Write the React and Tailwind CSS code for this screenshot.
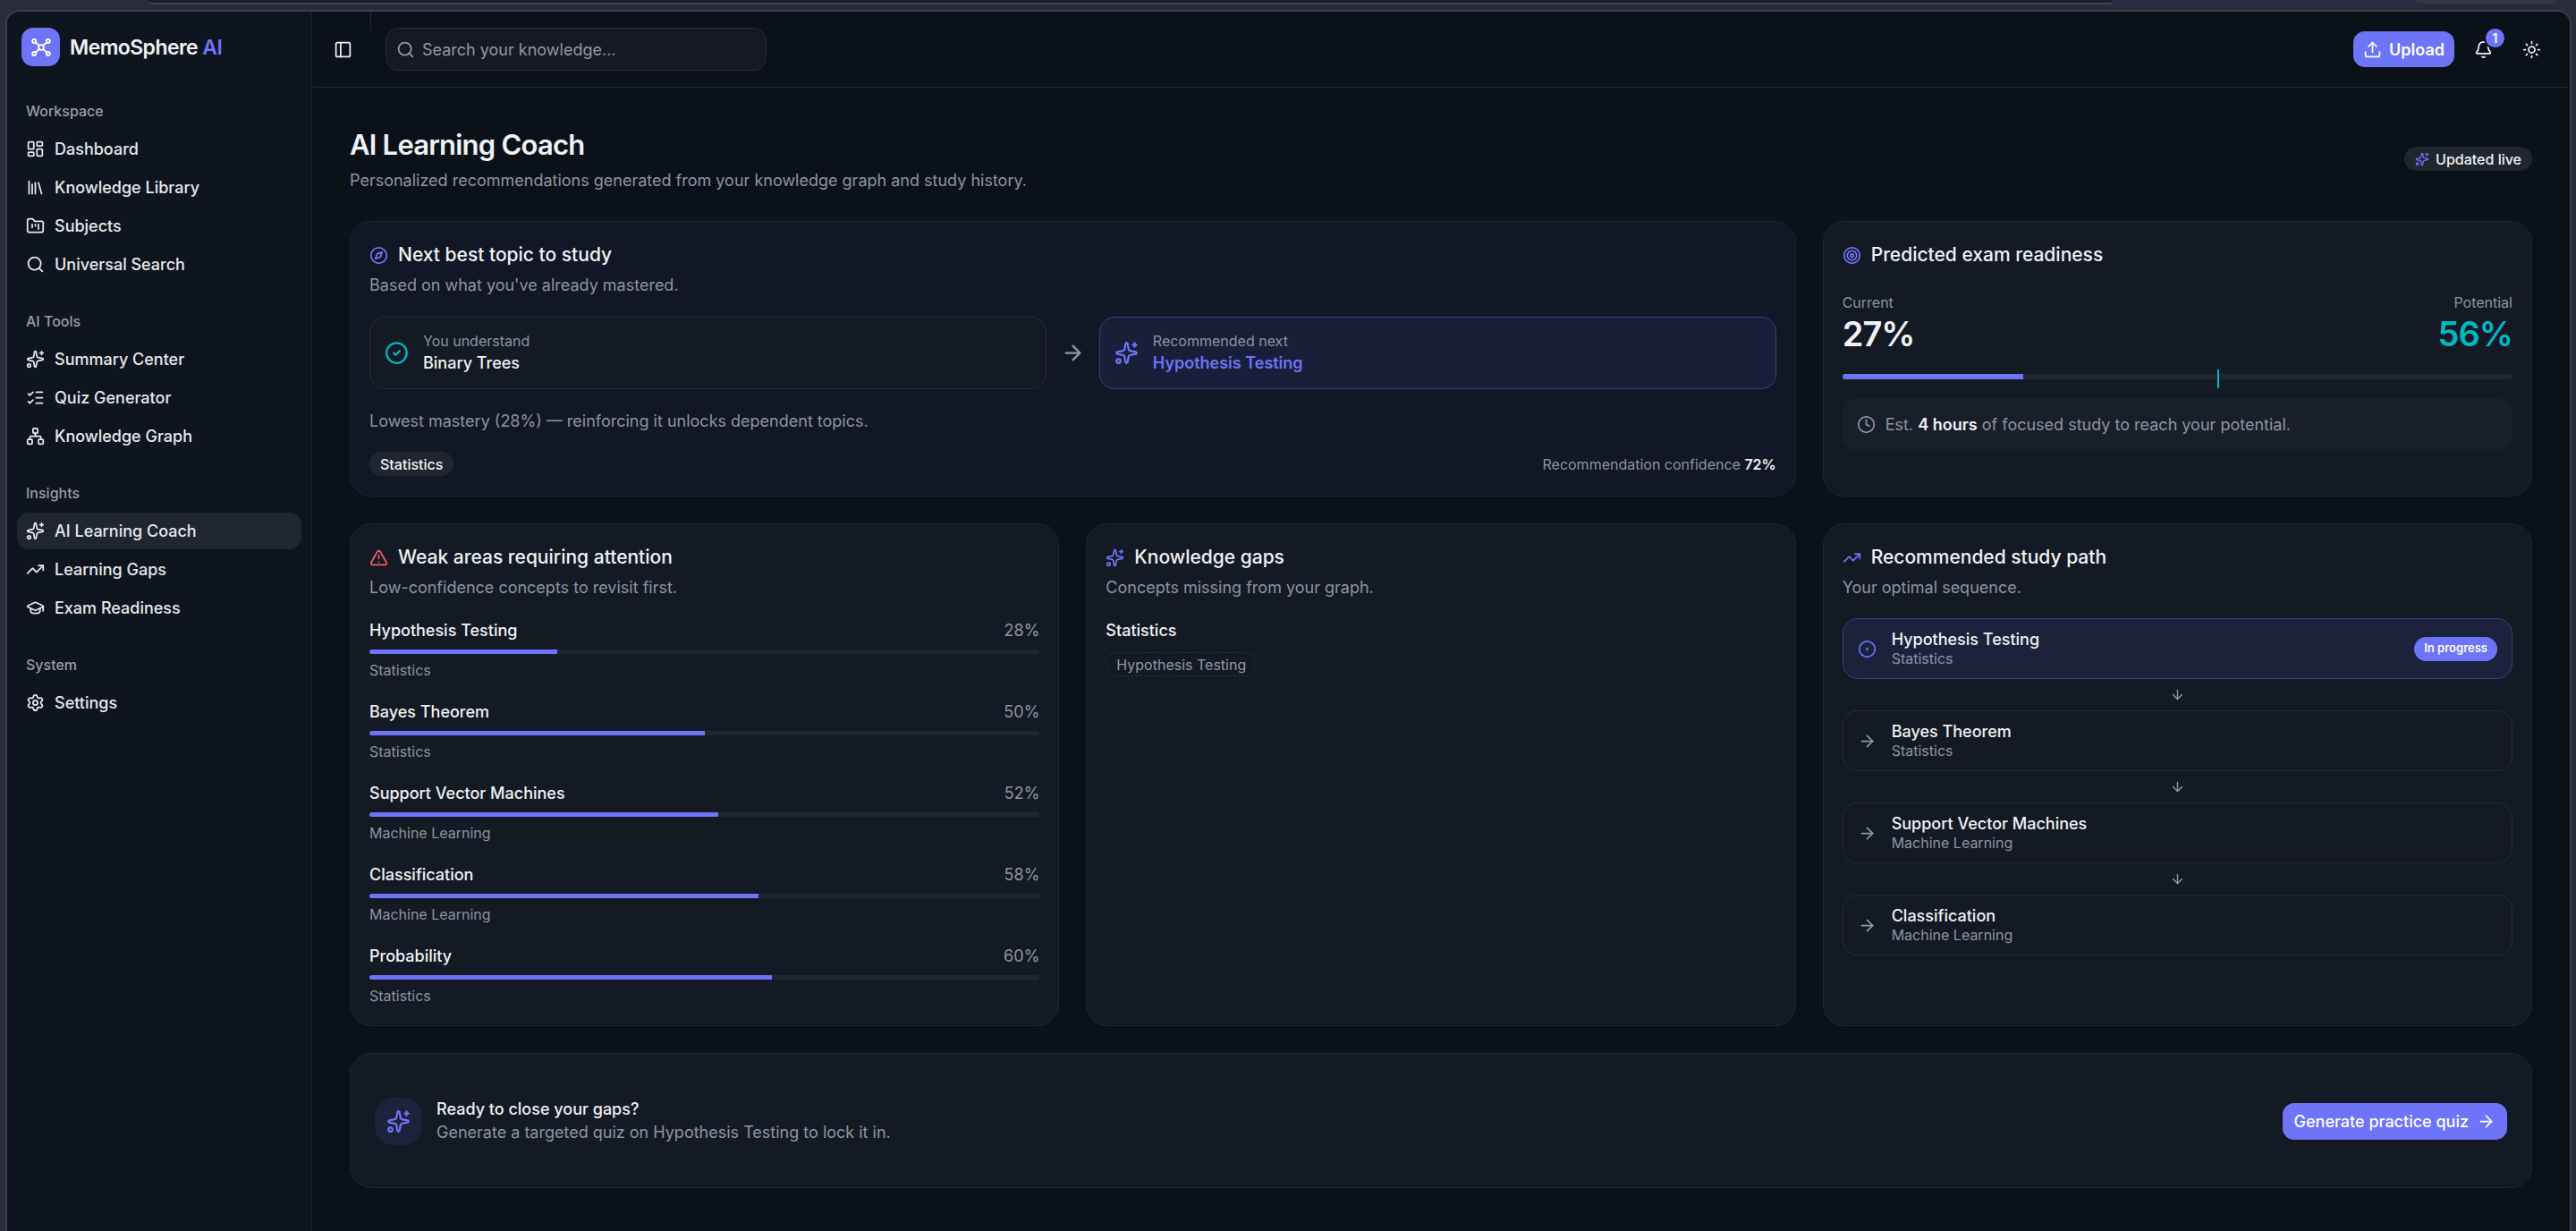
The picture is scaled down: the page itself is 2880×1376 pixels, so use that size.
import React from "react";
import {
  ArrowDown,
  ArrowRight,
  Bell,
  CircleCheck,
  CircleDot,
  Clock,
  Compass,
  FolderKanban,
  GraduationCap,
  LayoutDashboard,
  Library,
  ListChecks,
  Network,
  PanelLeft,
  Search,
  Settings,
  Sparkles,
  Sun,
  Target,
  TrendingUp,
  TriangleAlert,
  Upload,
} from "lucide-react";

const navGroups = [
  {
    label: "Workspace",
    items: [
      { name: "Dashboard", icon: LayoutDashboard },
      { name: "Knowledge Library", icon: Library },
      { name: "Subjects", icon: FolderKanban },
      { name: "Universal Search", icon: Search },
    ],
  },
  {
    label: "AI Tools",
    items: [
      { name: "Summary Center", icon: Sparkles },
      { name: "Quiz Generator", icon: ListChecks },
      { name: "Knowledge Graph", icon: Network },
    ],
  },
  {
    label: "Insights",
    items: [
      { name: "AI Learning Coach", icon: Sparkles, active: true },
      { name: "Learning Gaps", icon: TrendingUp },
      { name: "Exam Readiness", icon: GraduationCap },
    ],
  },
  {
    label: "System",
    items: [{ name: "Settings", icon: Settings }],
  },
];

const weakAreas = [
  { topic: "Hypothesis Testing", subject: "Statistics", score: 28 },
  { topic: "Bayes Theorem", subject: "Statistics", score: 50 },
  { topic: "Support Vector Machines", subject: "Machine Learning", score: 52 },
  { topic: "Classification", subject: "Machine Learning", score: 58 },
  { topic: "Probability", subject: "Statistics", score: 60 },
];

const studyPath = [
  { topic: "Hypothesis Testing", subject: "Statistics", current: true },
  { topic: "Bayes Theorem", subject: "Statistics" },
  { topic: "Support Vector Machines", subject: "Machine Learning" },
  { topic: "Classification", subject: "Machine Learning" },
];

const LogoMark = () => (
  <svg
    viewBox="0 0 24 24"
    className="size-[24px]"
    fill="none"
    stroke="currentColor"
    strokeWidth="1.9"
    strokeLinecap="round"
    aria-hidden="true"
  >
    <circle cx="12" cy="12" r="2.9" />
    <circle cx="4.2" cy="5" r="2" />
    <circle cx="19.8" cy="5" r="2" />
    <circle cx="4.2" cy="19" r="2" />
    <circle cx="19.8" cy="19" r="2" />
    <path d="M5.8 6.4 9.8 10M18.2 6.4 14.2 10M5.8 17.6 9.8 14M18.2 17.6 14.2 14" />
  </svg>
);

const Sidebar = () => (
  <aside className="w-[341px] shrink-0 border-r border-[#20262e] bg-[#0f151e] px-[11px]">
    <a href="#home" className="mt-[18px] flex items-center gap-[11px] px-[5px]">
      <span className="flex size-[43px] items-center justify-center rounded-[13px] bg-[#6e74f7] text-white">
        <LogoMark />
      </span>
      <span className="text-[23px] leading-[28px] font-semibold tracking-tight text-[#f0f2f5]">
        MemoSphere <span className="text-[#6e74f7]">AI</span>
      </span>
    </a>
    <nav className="mt-[28px] flex flex-col gap-[21px]">
      {navGroups.map((group) => (
        <div key={group.label}>
          <p className="flex h-[44px] items-center px-[10px] text-[16px] font-medium text-[#9a9ea6]">
            {group.label}
          </p>
          <ul className="flex flex-col gap-[2px]">
            {group.items.map(({ name, icon: Icon, active }) => (
              <li key={name}>
                <a
                  href="#nav"
                  className={`flex h-[41px] items-center gap-[11px] rounded-[13px] px-[10px] text-[18px] font-medium text-[#e6e9ed] ${
                    active ? "bg-[#20262f]" : ""
                  }`}
                >
                  <Icon className="size-[21px]" />
                  {name}
                </a>
              </li>
            ))}
          </ul>
        </div>
      ))}
    </nav>
  </aside>
);

const Header = () => (
  <header className="flex h-[85px] items-center border-b border-[#20262e] pr-[21px] pl-[13px]">
    <button className="flex size-[43px] items-center justify-center text-[#f0f2f5]" aria-label="Toggle sidebar">
      <PanelLeft className="size-[21px]" />
    </button>
    <span className="ml-[9px] h-[21px] w-px self-start bg-[#262b33]" />
    <label className="ml-[16px] flex h-[48px] w-[426px] items-center gap-[8px] rounded-[14px] border border-[#282d36] bg-[#151a22] px-[11px] text-[#9298a5]">
      <Search className="size-[21px]" />
      <input
        type="text"
        aria-label="Search your knowledge"
        placeholder="Search your knowledge..."
        className="min-w-0 flex-1 bg-transparent text-[18px] outline-none placeholder:text-[#9298a5]"
      />
    </label>
    <div className="ml-auto flex items-center gap-[11px]">
      <button className="flex h-[40px] items-center gap-[8px] rounded-[13px] bg-[#6e74f7] px-[11px] text-[18px] font-semibold text-white">
        <Upload className="size-[21px]" />
        Upload
      </button>
      <button className="relative flex size-[43px] items-center justify-center text-[#f0f2f5]" aria-label="Notifications">
        <Bell className="size-[21px]" />
        <span className="absolute -top-[2px] -right-[2px] flex size-[21px] items-center justify-center rounded-full bg-[#6e74f7] text-[14px] font-semibold text-white ring-2 ring-[#0b1118]">
          1
        </span>
      </button>
      <button className="flex size-[43px] items-center justify-center text-[#f0f2f5]" aria-label="Toggle theme">
        <Sun className="size-[21px]" />
      </button>
    </div>
  </header>
);

const Card = ({ className = "bg-[#141a24] px-[21px]", children }) => (
  <section className={`rounded-[24px] border border-[#20262e] pt-[23px] pb-[22px] ${className}`}>{children}</section>
);

const CardHeader = ({ icon: Icon, iconColor = "text-[#6e74f7]", title, subtitle }) => (
  <div className="flex flex-col gap-[6px]">
    <h2 className="flex items-center gap-[11px] text-[21px] leading-[28px] font-medium text-[#f0f2f5]">
      <Icon className={`size-[21px] ${iconColor}`} />
      {title}
    </h2>
    {subtitle && <p className="text-[18px] leading-[27px] text-[#8e94a2]">{subtitle}</p>}
  </div>
);

const NextTopic = () => (
  <Card className="col-span-2 bg-[#111724] px-[21px]">
    <CardHeader icon={Compass} title="Next best topic to study" subtitle="Based on what you've already mastered." />
    <div className="mt-[22px] flex items-center gap-[16px]">
      <div className="flex h-[81px] flex-1 items-center gap-[16px] rounded-[17px] border border-[#282d36] bg-[#141a24] px-[16px]">
        <CircleCheck className="size-[27px] text-[#00b8c4]" />
        <div>
          <p className="text-[16px] leading-[21px] text-[#8e94a2]">You understand</p>
          <p className="text-[18px] leading-[27px] font-medium text-[#f0f2f5]">Binary Trees</p>
        </div>
      </div>
      <ArrowRight className="size-[27px] text-[#9298a5]" />
      <div className="flex h-[81px] flex-1 items-center gap-[16px] rounded-[17px] border border-[#393e82] bg-[#191f39] px-[16px]">
        <Sparkles className="size-[27px] text-[#6e74f7]" />
        <div>
          <p className="text-[16px] leading-[21px] text-[#8e94a2]">Recommended next</p>
          <p className="text-[18px] leading-[27px] font-semibold text-[#6e74f7]">Hypothesis Testing</p>
        </div>
      </div>
    </div>
    <p className="mt-[22px] text-[18px] leading-[27px] text-[#8e94a2]">
      Lowest mastery (28%) — reinforcing it unlocks dependent topics.
    </p>
    <div className="mt-[21px] flex items-center justify-between text-[16px]">
      <span className="flex h-[27px] items-center rounded-full bg-[#20262f] px-[12px] font-medium text-[#f0f2f5]">
        Statistics
      </span>
      <span className="text-[#8e94a2]">
        Recommendation confidence <span className="font-semibold text-[#f0f2f5]">72%</span>
      </span>
    </div>
  </Card>
);

const Readiness = ({ current = 27, potential = 56 }) => (
  <Card>
    <CardHeader icon={Target} title="Predicted exam readiness" />
    <div className="mt-[29px] flex justify-between">
      <div>
        <p className="text-[16px] leading-[21px] text-[#8e94a2]">Current</p>
        <p className="text-[38px] leading-[48px] font-semibold tracking-tight text-[#f0f2f5]">{current}%</p>
      </div>
      <div className="text-right">
        <p className="text-[16px] leading-[21px] text-[#8e94a2]">Potential</p>
        <p className="text-[38px] leading-[48px] font-semibold tracking-tight text-[#00b8c4]">{potential}%</p>
      </div>
    </div>
    <div className="relative mt-[21px] h-[6px] rounded-full bg-[#20262f]">
      <div className="h-full rounded-l-full bg-[#6e74f7]" style={{ width: `${current}%` }} />
      <span className="absolute -top-[5px] h-[21px] w-[2px] bg-[#00b8c4]" style={{ left: `${potential}%` }} />
    </div>
    <div className="mt-[21px] flex h-[59px] items-center gap-[11px] rounded-[17px] bg-[#191f29] px-[16px] text-[18px] text-[#8e94a2]">
      <Clock className="size-[21px]" />
      <p>
        Est. <span className="font-semibold text-[#f0f2f5]">4 hours</span> of focused study to reach your potential.
      </p>
    </div>
  </Card>
);

const WeakAreas = () => (
  <Card>
    <CardHeader
      icon={TriangleAlert}
      iconColor="text-[#f75a62]"
      title="Weak areas requiring attention"
      subtitle="Low-confidence concepts to revisit first."
    />
    <div className="mt-[21px] flex flex-col gap-[22px]">
      {weakAreas.map((area) => (
        <div key={area.topic}>
          <div className="flex justify-between text-[18px] leading-[27px]">
            <span className="font-medium text-[#f0f2f5]">{area.topic}</span>
            <span className="text-[#8e94a2]">{area.score}%</span>
          </div>
          <div className="my-[8px] h-[5px] overflow-hidden rounded-full bg-[#20262f]">
            <div className="h-full bg-[#6e74f7]" style={{ width: `${area.score}%` }} />
          </div>
          <p className="text-[16px] leading-[21px] text-[#8e94a2]">{area.subject}</p>
        </div>
      ))}
    </div>
  </Card>
);

const KnowledgeGaps = () => (
  <Card>
    <CardHeader icon={Sparkles} title="Knowledge gaps" subtitle="Concepts missing from your graph." />
    <h3 className="mt-[21px] text-[18px] leading-[27px] font-medium text-[#f0f2f5]">Statistics</h3>
    <span className="mt-[11px] inline-flex h-[27px] items-center rounded-full border border-dashed border-[#2b3038] px-[11px] text-[16px] text-[#9298a5]">
      Hypothesis Testing
    </span>
  </Card>
);

const StudyPath = () => (
  <Card>
    <CardHeader icon={TrendingUp} title="Recommended study path" subtitle="Your optimal sequence." />
    <ol className="mt-[21px]">
      {studyPath.map((step, index) => (
        <li key={step.topic}>
          {index > 0 && <ArrowDown className="mx-auto my-[9px] size-[17px] text-[#9298a5]" />}
          <div
            className={`flex items-center gap-[17px] rounded-[17px] border px-[16px] py-[11px] ${
              step.current ? "border-[#393e82] bg-[#1c223c]" : "border-[#282d36]"
            }`}
          >
            {step.current ? (
              <CircleDot className="size-[21px] text-[#6e74f7] [&>circle:last-child]:fill-current [&>circle:last-child]:stroke-[1.5]" />
            ) : (
              <ArrowRight className="size-[21px] text-[#9298a5]" />
            )}
            <div className="flex-1">
              <p className="text-[18px] leading-[23px] font-medium text-[#f0f2f5]">{step.topic}</p>
              <p className="text-[16px] leading-[21px] text-[#8e94a2]">{step.subject}</p>
            </div>
            {step.current && (
              <span className="flex h-[27px] items-center rounded-full bg-[#6e74f7] px-[11px] text-[13px] font-semibold text-white">
                In progress
              </span>
            )}
          </div>
        </li>
      ))}
    </ol>
  </Card>
);

const QuizPrompt = () => (
  <Card className="col-span-3 flex min-h-[151px] items-center gap-[16px] bg-[#141a24] px-[27px]">
    <span className="flex size-[53px] items-center justify-center rounded-[21px] bg-[#1c223c] text-[#6e74f7]">
      <Sparkles className="size-[27px]" />
    </span>
    <div className="flex-1 text-[18px] leading-[26px]">
      <h2 className="font-medium text-[#f0f2f5]">Ready to close your gaps?</h2>
      <p className="text-[#8e94a2]">Generate a targeted quiz on Hypothesis Testing to lock it in.</p>
    </div>
    <button className="flex h-[41px] items-center gap-[9px] rounded-[13px] bg-[#6e74f7] px-[13px] text-[18px] font-medium text-white">
      Generate practice quiz
      <ArrowRight className="size-[21px]" />
    </button>
  </Card>
);

export default function App() {
  return (
    <div className="flex min-h-screen flex-col bg-[#282c3c] font-[Inter,sans-serif]">
      {/* Bottom edge of the browser toolbar */}
      <div className="flex h-[11px] items-start justify-between pr-[22px] pl-[165px]">
        <div className="h-[5px] w-[2198px] rounded-b-[14px] border-b-2 border-[#44454f] bg-[#1d1f2b]" />
        <div className="h-[4px] w-[157px] rounded-b-[14px] bg-[#353747]" />
      </div>
      <div className="mr-[5px] ml-[6px] flex flex-1 overflow-hidden rounded-t-[16px] border-2 border-b-0 border-[#3d3e4a] bg-[#0b1118]">
        <Sidebar />
        <div className="min-w-0 flex-1">
          <Header />
          <main className="px-[42px] pt-[42px] pb-[46px]">
            <div className="flex items-center justify-between">
              <div>
                <h1 className="text-[31px] leading-[43px] font-semibold tracking-tight text-[#f0f2f5]">
                  AI Learning Coach
                </h1>
                <p className="mt-[5px] text-[18px] leading-[27px] text-[#8e94a2]">
                  Personalized recommendations generated from your knowledge graph and study history.
                </p>
              </div>
              <span className="flex h-[27px] items-center gap-[7px] rounded-full bg-[#20262f] px-[12px] text-[16px] font-medium text-[#f0f2f5]">
                <Sparkles className="size-[16px] text-[#6e74f7]" />
                Updated live
              </span>
            </div>
            <div className="mt-[32px] grid grid-cols-3 gap-[30px]">
              <NextTopic />
              <Readiness />
              <WeakAreas />
              <KnowledgeGaps />
              <StudyPath />
              <QuizPrompt />
            </div>
          </main>
        </div>
      </div>
    </div>
  );
}
